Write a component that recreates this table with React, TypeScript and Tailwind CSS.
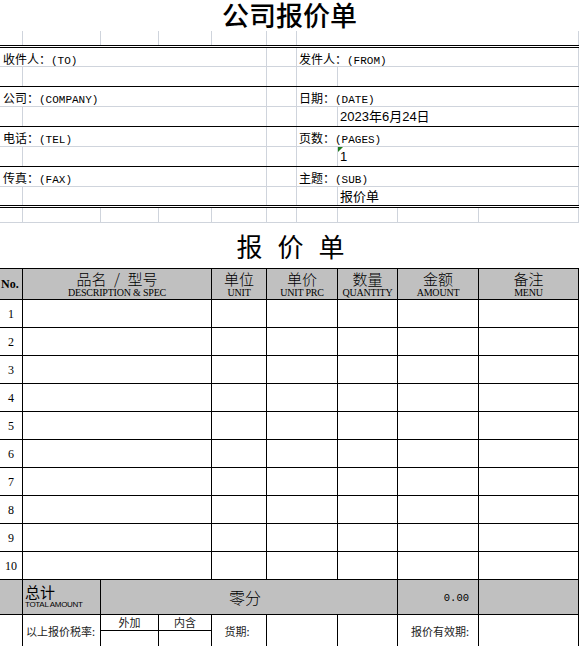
import React from 'react';

const rows = [1, 2, 3, 4, 5, 6, 7, 8, 9, 10];

function Label({ cn, en }: { cn: string; en: string }) {
  return (
    <span className="whitespace-nowrap">
      <span className="text-[12px]">{cn}</span>
      <span className="text-[11px] font-['Liberation_Mono',monospace]">{en}</span>
    </span>
  );
}

function HeadCell({ w, cn, en }: { w: string; cn: string; en: string }) {
  return (
    <div className={`${w} h-full border-r border-black flex flex-col items-center pt-[2px]`}>
      <span className="text-[15px] leading-[16px] font-light whitespace-pre">{cn}</span>
      <span className="text-[10px] leading-[11px] font-['Liberation_Serif',serif] tracking-[-0.2px]">{en}</span>
    </div>
  );
}

export default function App() {
  return (
    <div className="w-[579px] h-[646px] overflow-hidden bg-white text-black font-['Noto_Sans_CJK_SC',sans-serif]">
      {/* 标题 */}
      <div className="h-[31px] flex items-end justify-center pb-[1px] text-[27px] leading-[30px] font-medium">
        公司报价单
      </div>

      <div className="h-[14px] flex">
        <div className="w-[23px] border-r border-[#cfd4dc]" />
        <div className="w-[78px] border-r border-[#cfd4dc]" />
        <div className="w-[58px] border-r border-[#cfd4dc]" />
        <div className="w-[53px] border-r border-[#cfd4dc]" />
        <div className="w-[55px] border-r border-[#cfd4dc]" />
        <div className="w-[30px] border-r border-[#cfd4dc]" />
        <div className="flex-1 border-r border-[#cfd4dc]" />
      </div>
      <div className="h-[3px] border-y border-black" />

      {/* 收件人 / 发件人 */}
      {[
        { l: ['收件人：', '(TO)'], r: ['发件人：', '(FROM)'], v: '', first: true, last: false },
        { l: ['公司：', '(COMPANY)'], r: ['日期：', '(DATE)'], v: '2023年6月24日', first: false, last: false },
        { l: ['电话：', '(TEL)'], r: ['页数：', '(PAGES)'], v: '1', first: false, last: false },
        { l: ['传真：', '(FAX)'], r: ['主题：', '(SUB)'], v: '报价单', first: false, last: true },
      ].map((item, i) => (
        <React.Fragment key={i}>
          <div className={item.first ? 'h-[19px] flex border-b border-[#cfd4dc]' : 'h-[20px] flex border-b border-[#cfd4dc]'}>
            <div className="w-[267px] border-r border-[#cfd4dc] pl-[3px] flex items-center">
              <Label cn={item.l[0]} en={item.l[1]} />
            </div>
            <div className="w-[30px] border-r border-[#cfd4dc]" />
            <div className="flex-1 border-r border-[#cfd4dc] pl-[2px] flex items-center">
              <Label cn={item.r[0]} en={item.r[1]} />
            </div>
          </div>
          <div className={item.last ? 'h-[18px] flex' : 'h-[20px] flex border-b border-black'}>
            <div className="w-[23px] border-r border-[#cfd4dc]" />
            <div className="w-[244px] border-r border-[#cfd4dc]" />
            <div className="w-[30px] border-r border-[#cfd4dc]" />
            <div className="w-[41px] border-r border-[#cfd4dc]" />
            <div className="relative flex-1 border-r border-[#cfd4dc] pl-[2px] flex items-center text-[13px] leading-none font-['Liberation_Sans','Noto_Sans_CJK_SC',sans-serif]">
              {item.v === '1' && (
                <span className="absolute left-0 top-0 w-0 h-0 border-t-[5px] border-r-[5px] border-t-[#1e7b1e] border-r-transparent" />
              )}
              {item.v}
            </div>
          </div>
        </React.Fragment>
      ))}
      <div className="h-[3px] border-y border-black" />

      <div className="h-[15px] flex border-b border-[#cfd4dc]">
        <div className="w-[23px] border-r border-[#cfd4dc]" />
        <div className="w-[78px] border-r border-[#cfd4dc]" />
        <div className="w-[58px] border-r border-[#cfd4dc]" />
        <div className="w-[53px] border-r border-[#cfd4dc]" />
        <div className="w-[55px] border-r border-[#cfd4dc]" />
        <div className="w-[30px] border-r border-[#cfd4dc]" />
        <div className="w-[41px] border-r border-[#cfd4dc]" />
        <div className="w-[60px] border-r border-[#cfd4dc]" />
        <div className="w-[81px] border-r border-[#cfd4dc]" />
        <div className="flex-1 border-r border-[#cfd4dc]" />
      </div>

      {/* 报价单 */}
      <div className="h-[45px] flex items-center justify-center gap-[15px] text-[26px] leading-none pl-[2px]">
        <span>报</span>
        <span>价</span>
        <span>单</span>
      </div>

      {/* 表格 */}
      <div className="border-t border-black">
        <div className="h-[31px] flex border-b border-black bg-[#c0c0c0]">
          <div className="w-[23px] h-full border-r border-black flex items-center pl-[1px] text-[12px] font-bold font-['Liberation_Serif',serif]">
            No.
          </div>
          <HeadCell w="w-[189px]" cn={'品名\u2002/\u2002型号'} en="DESCRIPTION & SPEC" />
          <HeadCell w="w-[55px]" cn="单位" en="UNIT" />
          <HeadCell w="w-[71px]" cn="单价" en="UNIT PRC" />
          <HeadCell w="w-[60px]" cn="数量" en="QUANTITY" />
          <HeadCell w="w-[81px]" cn="金额" en="AMOUNT" />
          <HeadCell w="flex-1" cn="备注" en="MENU" />
        </div>

        {rows.map((n) => (
          <div key={n} className="h-[28px] flex border-b border-black">
            <div className="w-[23px] border-r border-black flex items-center justify-center text-[12px] font-['Liberation_Serif',serif]">
              {n}
            </div>
            <div className="w-[189px] border-r border-black" />
            <div className="w-[55px] border-r border-black" />
            <div className="w-[71px] border-r border-black" />
            <div className="w-[60px] border-r border-black" />
            <div className="w-[81px] border-r border-black" />
            <div className="flex-1 border-r border-black" />
          </div>
        ))}

        {/* 总计 */}
        <div className="h-[35px] flex border-b border-black bg-[#c0c0c0]">
          <div className="w-[23px] border-r border-black" />
          <div className="w-[78px] border-r border-black pl-[2px] flex flex-col justify-center">
            <span className="text-[15px] leading-[16px]">总计</span>
            <span className="text-[8px] leading-[10px] font-['Liberation_Sans',sans-serif] tracking-[-0.3px]">TOTAL AMOUNT</span>
          </div>
          <div className="w-[297px] border-r border-black flex items-center justify-center pr-[8px] text-[16px] font-light">
            零分
          </div>
          <div className="w-[81px] border-r border-black flex items-center justify-end pr-[9px] pt-[4px] text-[10.5px] font-['Liberation_Mono',monospace]">
            0.00
          </div>
          <div className="flex-1 border-r border-black" />
        </div>

        <div className="h-[32px] flex text-[11px] text-[#222]">
          <div className="w-[23px] border-r border-black" />
          <div className="w-[78px] border-r border-black flex items-center pl-[3px]">以上报价税率:</div>
          <div className="w-[58px] border-r border-black flex flex-col">
            <div className="h-[16px] border-b border-black flex items-center justify-center">外加</div>
          </div>
          <div className="w-[53px] border-r border-black flex flex-col">
            <div className="h-[16px] border-b border-black flex items-center justify-center">内含</div>
          </div>
          <div className="w-[55px] border-r border-black flex items-center justify-center pr-[4px]">货期:</div>
          <div className="w-[71px] border-r border-black" />
          <div className="w-[60px] border-r border-black" />
          <div className="w-[81px] border-r border-black flex items-center justify-center pl-[4px]">报价有效期:</div>
          <div className="flex-1 border-r border-black" />
        </div>
      </div>
    </div>
  );
}
